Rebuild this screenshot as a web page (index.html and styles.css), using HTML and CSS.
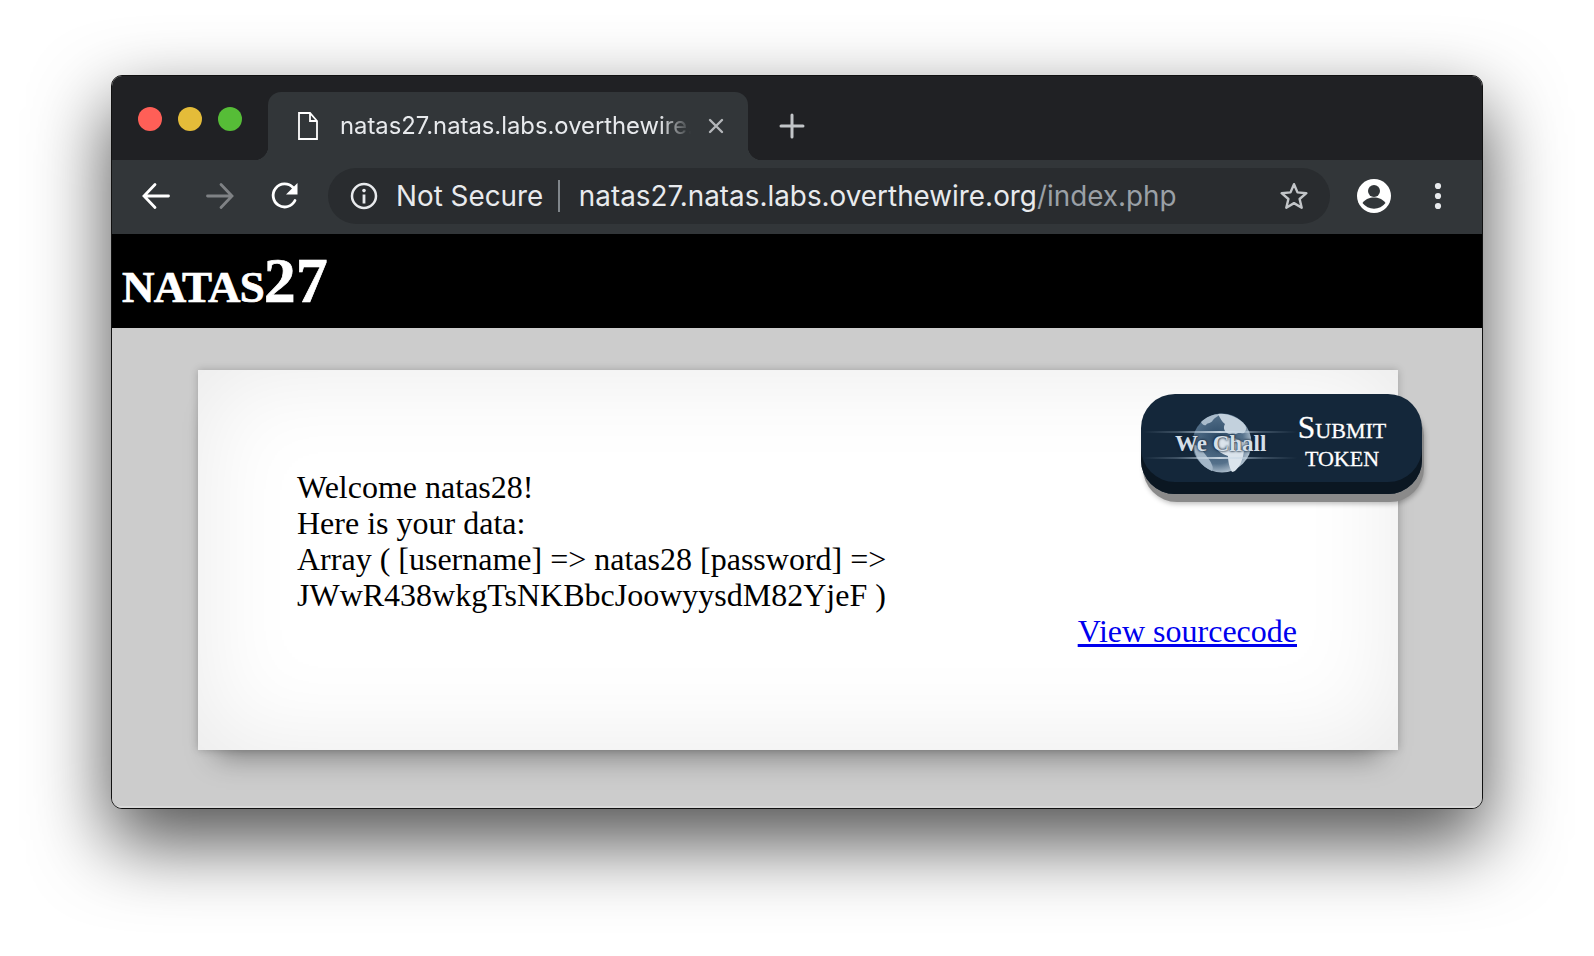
FILE: index.html
```html
<!DOCTYPE html>
<html lang="en">
<head>
<meta charset="utf-8">
<title>natas27</title>
<link rel="stylesheet" href="styles.css">
</head>
<body>
<div class="window">
  <div class="tabstrip">
    <div class="lights"><span class="light red"></span><span class="light yellow"></span><span class="light green"></span></div>
    <div class="tab">
      <svg class="doc" width="22" height="30" viewBox="0 0 22 30"><path d="M2 2h11l7 8v18H2z M13 2v8h7" fill="none" stroke="#fff" stroke-width="1.8"/></svg>
      <span class="tabtitle">natas27.natas.labs.overthewire.org/index.php</span>
      <svg class="close" width="16" height="16" viewBox="0 0 16 16"><path d="M2 2l12 12M14 2L2 14" stroke="#b4b7ba" stroke-width="2.4" stroke-linecap="round"/></svg>
    </div>
    <svg class="plus" width="26" height="26" viewBox="0 0 26 26"><path d="M13 2v22M2 13h22" stroke="#c2c5c8" stroke-width="3" stroke-linecap="round"/></svg>
  </div>
  <div class="toolbar">
    <svg class="nav" width="30" height="30" viewBox="0 0 30 30"><path d="M27.500 15H4M14 3.500L3 15l11 11.500" fill="none" stroke="#fff" stroke-width="2.8" stroke-linecap="round"/></svg>
    <svg class="nav nav-forward" width="30" height="30" viewBox="0 0 30 30"><path d="M2.500 15H26M16 3.500L27 15 16 26.500" fill="none" stroke="#7f8285" stroke-width="2.8" stroke-linecap="round"/></svg>
    <svg class="nav nav-reload" width="30" height="30" viewBox="0 0 30 30"><path d="M25 19.500A11.500 11.500 0 1 1 23 6.500" fill="none" stroke="#fff" stroke-width="2.8" stroke-linecap="round"/><path d="M27.500 2v11.500H16z" fill="#fff"/></svg>
    <div class="omnibox">
      <svg class="info" width="28" height="28" viewBox="0 0 28 28"><circle cx="14" cy="14" r="12" fill="none" stroke="#e8eaed" stroke-width="2.5"/><circle cx="14" cy="8.600" r="1.800" fill="#e8eaed"/><path d="M14 12.500v9" stroke="#e8eaed" stroke-width="2.8"/></svg>
      <span class="secure">Not Secure</span>
      <span class="sep"></span>
      <span class="url">natas27.natas.labs.overthewire.org<span class="urlpath">/index.php</span></span>
      <svg class="star" width="30" height="30" viewBox="0 0 30 30"><path d="M15 3.200l3.500 8.200 8.900.8-6.800 5.800 2.100 8.700-7.700-4.600-7.700 4.600 2.100-8.700-6.800-5.800 8.900-.8z" fill="none" stroke="#c2c5c8" stroke-width="2.4" stroke-linejoin="round"/></svg>
    </div>
    <svg class="avatar" width="36" height="36" viewBox="0 0 36 36"><circle cx="18" cy="18" r="17" fill="#fff"/><circle cx="18" cy="13" r="6" fill="#323639"/><path d="M6.500 25c3-4 7-5.500 11.500-5.500S26.500 21 29.500 25a14.500 14.500 0 0 1-23 0z" fill="#323639"/></svg>
    <svg class="kebab" width="8" height="28" viewBox="0 0 8 28"><circle cx="4" cy="4" r="3.100" fill="#e8eaed"/><circle cx="4" cy="14" r="3.100" fill="#e8eaed"/><circle cx="4" cy="24" r="3.100" fill="#e8eaed"/></svg>
  </div>
  <div class="page">
    <header class="banner"><h1 class="brand"><span class="word">natas</span><span class="num">27</span></h1></header>
    <main class="main">
      <a class="wechall" href="#">
        <span class="logo">
          <svg class="globe" width="60" height="60" viewBox="0 0 60 60">
            <defs>
              <radialGradient id="sea" cx="0.42" cy="0.42" r="0.62"><stop offset="0" stop-color="#2c4a66"/><stop offset="0.7" stop-color="#55718b"/><stop offset="1" stop-color="#b9c8d5"/></radialGradient>
              <linearGradient id="streak" x1="0" x2="1"><stop offset="0" stop-color="#b8cbdc" stop-opacity="0"/><stop offset="0.22" stop-color="#b8cbdc" stop-opacity=".25"/><stop offset="0.5" stop-color="#d6e2ec" stop-opacity=".9"/><stop offset="0.78" stop-color="#b8cbdc" stop-opacity=".25"/><stop offset="1" stop-color="#b8cbdc" stop-opacity="0"/></linearGradient>
            </defs>
            <circle cx="30" cy="30" r="29.500" fill="url(#sea)"/>
            <path d="M9 9c5-5 12-8 19-8-2 3-5 3-7 6-2 4-5 2-7 5-2 1-4-1-5-3z" fill="#a9bbcb"/>
            <path d="M26 1c10-1 20 3 27 11 2 3 1 6-1 8-3 1-5-1-8 1-3-1-6 1-9-1-3-2-4-6-2-9-3-2-5-6-7-10z" fill="#c3d1dd"/>
            <path d="M24 27c4-4 9-3 14-2 5 0 9 1 12 4 3 0 6-1 8-1-1 5-4 7-6 10-1 7-3 14-8 19-1 1-3 2-4 2-3-5-4-12-4-16-5-2-11-4-12-10z" fill="#dbe4ec"/>
            <path d="M2 32c3 0 6 2 8 5 3 5 8 9 10 15 1 2 1 4 0 6C9 53 2 43 2 32z" fill="#a3b6c7"/>
          </svg>
          <svg class="streaks" width="154" height="32" viewBox="0 0 154 32"><rect x="0" y="1" width="154" height="2" fill="url(#streak)"/><rect x="0" y="27" width="154" height="2" fill="url(#streak)"/></svg>
          <span class="logotext">We Chall</span>
        </span>
        <span class="submit"><span class="submit1">Submit</span><span class="submit2">token</span></span>
      </a>
      <div class="card">
        <p class="data">Welcome natas28!<br>Here is your data:<br>Array ( [username] =&gt; natas28 [password] =&gt;<br>JWwR438wkgTsNKBbcJoowyysdM82YjeF )</p>
        <div class="source"><a href="#">View sourcecode</a></div>
      </div>
    </main>
  </div>
</div>
</body>
</html>
```

FILE: styles.css
```css
* { box-sizing: border-box; }
html, body { height: 100%; }
body {
  margin: 0;
  background: #fff;
  padding: 75px 111px 0 111px;
  overflow: hidden;
  font-family: "Liberation Serif", "Times New Roman", serif;
}
.window {
  width: 1372px;
  height: 734px;
  border: 1px solid #111;
  border-radius: 11px;
  overflow: hidden;
  background: #ccc;
  box-shadow: 0 32px 76px 2px rgba(0, 0, 0, .68);
  display: flex;
  flex-direction: column;
}
.tabstrip {
  height: 84px;
  background: #202124;
  display: flex;
  align-items: flex-end;
  flex: none;
}
.lights {
  display: flex;
  gap: 16px;
  padding: 0 0 29px 26px;
  width: 156px;
}
.light { width: 24px; height: 24px; border-radius: 50%; }
.red { background: #ff5f57; }
.yellow { background: #e4bc39; }
.green { background: #56bd37; }
.tab {
  position: relative;
  width: 480px;
  height: 68px;
  background: #323639;
  border-radius: 13px 13px 0 0;
  display: flex;
  align-items: center;
  padding: 0 20px 1px 29px;
  color: #e8eaed;
  font-family: Inter, Roboto, sans-serif;
  font-size: 23.8px;
}
.tab::before, .tab::after {
  content: "";
  position: absolute;
  bottom: 0;
  width: 14px;
  height: 14px;
}
.tab::before { left: -14px; background: radial-gradient(circle at 0 0, #202124 14px, #323639 14.5px); }
.tab::after { right: -14px; background: radial-gradient(circle at 100% 0, #202124 14px, #323639 14.5px); }
.doc { flex: none; }
.tabtitle {
  margin-left: 21px;
  width: 351px;
  overflow: hidden;
  white-space: nowrap;
  -webkit-mask-image: linear-gradient(to right, #000 91%, transparent 100%);
  mask-image: linear-gradient(to right, #000 91%, transparent 100%);
}
.close { margin-left: 17px; flex: none; }
.plus { margin: 0 0 21px 31px; flex: none; }
.toolbar {
  height: 74px;
  background: #323639;
  flex: none;
  display: flex;
  align-items: center;
  padding: 0 0 2px 29px;
  color: #e8eaed;
  font-family: Inter, Roboto, sans-serif;
}
.nav { flex: none; }
.nav-forward { margin-left: 34px; }
.nav-reload { margin-left: 35px; }
.omnibox {
  margin-left: 28px;
  width: 1002px;
  height: 56px;
  border-radius: 28px;
  background: #292c2f;
  display: flex;
  align-items: center;
  padding: 0 21px 0 22px;
  font-size: 27.85px;
}
.info { flex: none; }
.secure { margin-left: 18px; }
.sep { width: 1.500px; height: 32px; background: #80868b; margin: 0 19px 0 15px; flex: none; }
.url { flex: 1; white-space: nowrap; }
.urlpath { color: #9aa0a6; }
.star { flex: none; }
.avatar { margin-left: 26px; flex: none; }
.kebab { margin-left: 42px; flex: none; }
.page { flex: 1; display: flex; flex-direction: column; min-height: 0; }
.banner { height: 94px; background: #000; flex: none; padding-left: 10px; }
.brand {
  margin: 0;
  color: #fff;
  font-size: 64px;
  font-weight: bold;
  line-height: 94px;
  font-variant: small-caps;
  -webkit-text-stroke: .7px #fff;
}
.word { letter-spacing: -.8px; }
.main {
  position: relative;
  flex: 1;
  background: #ccc;
  padding: 42px 0 0 86px;
  border-bottom: 2px solid #d9d9d9;
}
.card {
  width: 1200px;
  height: 380px;
  background: #fff;
  padding: 99px 101px 0 99px;
  font-size: 32px;
  line-height: 36px;
  color: #000;
  box-shadow:
    inset 0 0 100px rgba(0, 0, 0, .09),
    0 0 8px rgba(0, 0, 0, .22),
    0 24px 28px -18px rgba(0, 0, 0, .4);
}
.data { margin: 0; }
.source { text-align: right; }
.source a { color: #0000ee; }
.wechall {
  position: absolute;
  left: 1029px;
  top: 66px;
  width: 281px;
  height: 100px;
  border-radius: 34px;
  background: #14273a;
  box-shadow: inset 0 -12px 0 #0b1722, 2px 8px 0 #8a8a8a, 3px 10px 5px rgba(0, 0, 0, .25);
  display: flex;
  align-items: center;
  padding-bottom: 8px;
  text-decoration: none;
  color: #fff;
}
.logo { position: relative; width: 150px; height: 100%; flex: none; display: block; }
.globe { position: absolute; left: 51px; top: 19px; }
.streaks { position: absolute; left: 2px; top: 36px; }
.logotext {
  position: absolute;
  left: 34px;
  top: 37px;
  font-size: 23px;
  font-weight: bold;
  color: #d5dfe8;
  white-space: nowrap;
  text-shadow: 0 0 3px #14273a, 0 0 2px #14273a;
}
.submit {
  display: flex;
  flex-direction: column;
  align-items: center;
  width: 88px;
  margin: 4px 0 0 7px;
  font-variant: small-caps;
  line-height: 30px;
  -webkit-text-stroke: .3px #fff;
}
.submit1 { font-size: 31.5px; }
.submit2 { font-size: 31px; margin-top: -2px; }
```
